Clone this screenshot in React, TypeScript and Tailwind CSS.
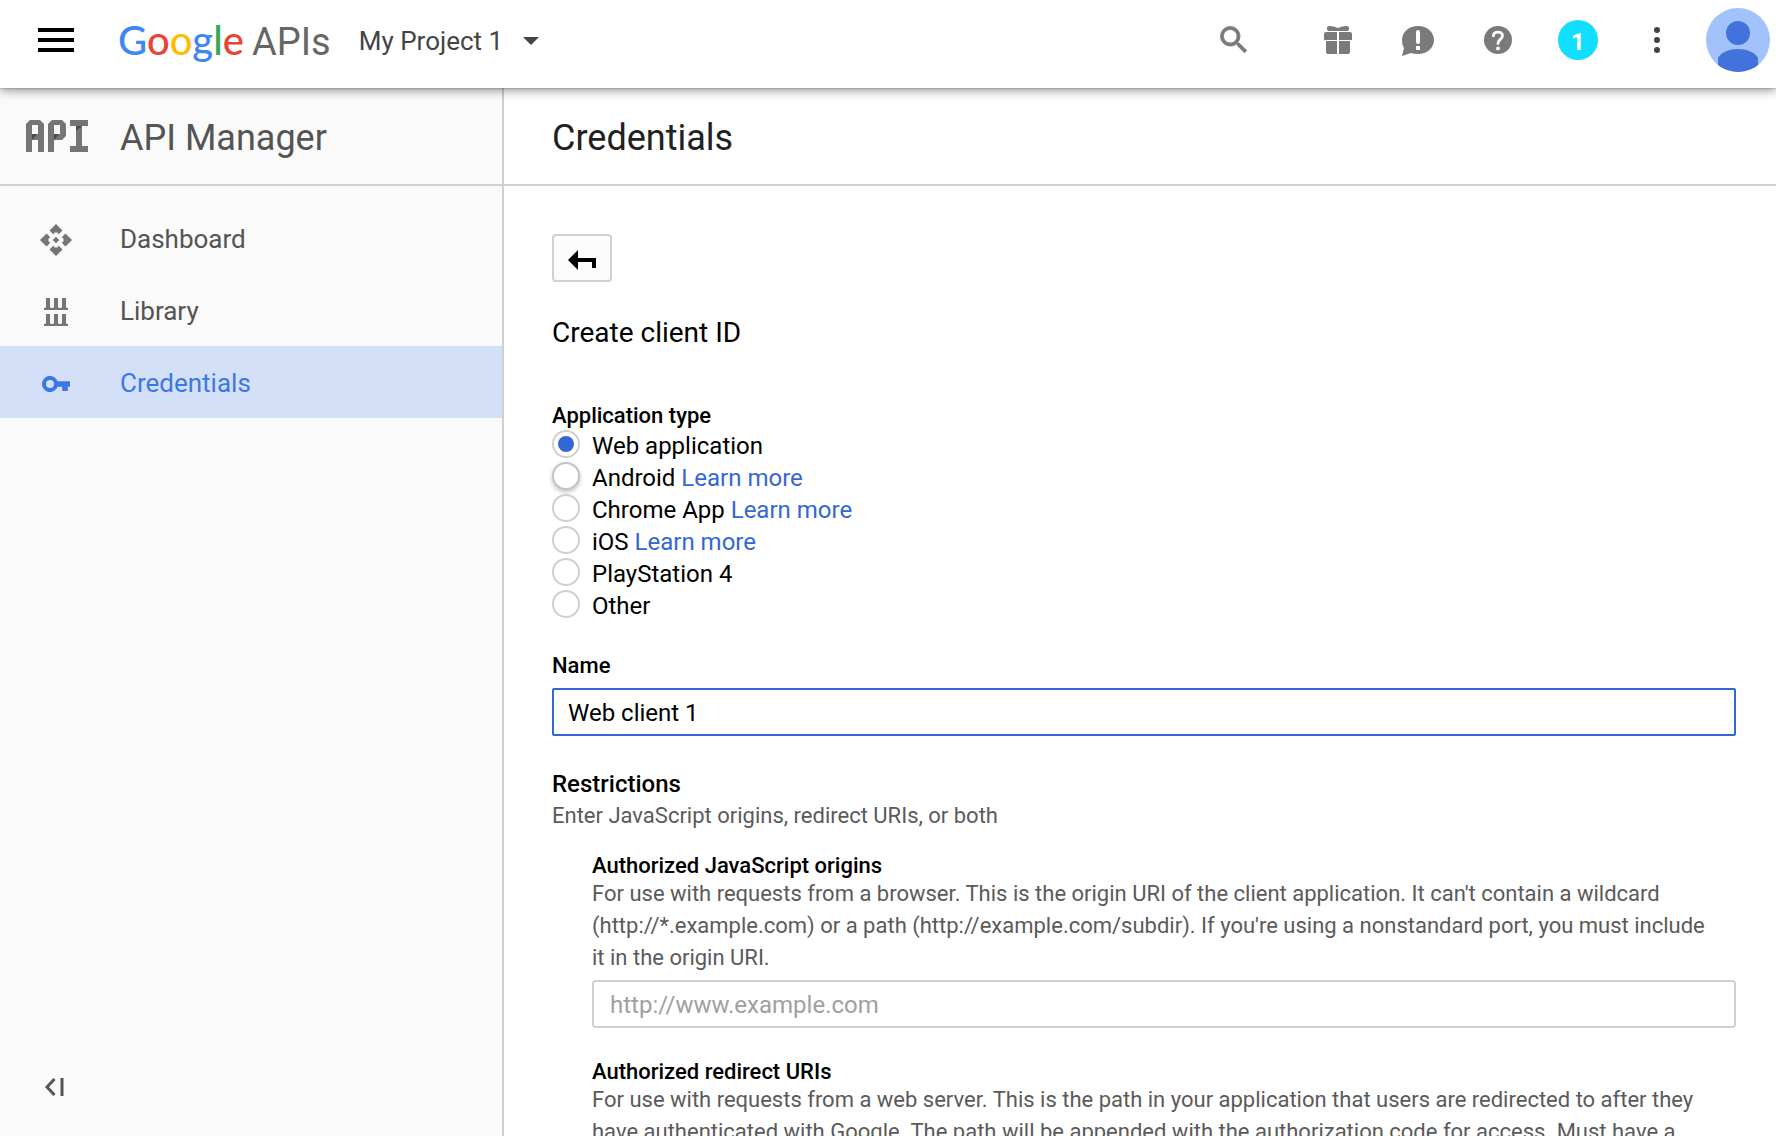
import React from "react";

const navItems = [
  { label: "Dashboard", icon: <DashboardIcon />, active: false },
  { label: "Library", icon: <LibraryIcon />, active: false },
  { label: "Credentials", icon: <KeyIcon />, active: true },
];

const appTypes = [
  { id: "web", label: "Web application", link: false, hovered: false },
  { id: "android", label: "Android", link: true, hovered: true },
  { id: "chrome", label: "Chrome App", link: true, hovered: false },
  { id: "ios", label: "iOS", link: true, hovered: false },
  { id: "ps4", label: "PlayStation 4", link: false, hovered: false },
  { id: "other", label: "Other", link: false, hovered: false },
];

function DashboardIcon() {
  return (
    <svg viewBox="0 0 32 32" className="size-8" fill="currentColor" aria-hidden="true">
      <path d="M16 0l6.500 6.500-4 4-1-2h-3l-1 2-4-4zM16 32l-6.500-6.500 4-4 1 2h3l1-2 4 4zM0 16l6.500-6.500 4 4-2 1v3l2 1-4 4zM32 16l-6.500 6.500-4-4 2-1v-3l-2-1 4-4zM16 12.800l3.200 3.200-3.200 3.200-3.200-3.200z" />
    </svg>
  );
}

function LibraryIcon() {
  return (
    <svg viewBox="0 0 32 32" className="size-8" fill="currentColor" aria-hidden="true">
      <path d="M4 12h24v2H4zM4 28h24v2H4zM6 2h4v9l1 1H5l1-1zM14 2h4v9l1 1h-6l1-1zM22 2h4v9l1 1h-6l1-1zM6 18h4v9l1 1H5l1-1zM14 18h4v9l1 1h-6l1-1zM22 18h4v9l1 1h-6l1-1z" />
    </svg>
  );
}

function KeyIcon() {
  return (
    <svg viewBox="0 0 32 32" className="size-8" fill="currentColor" aria-hidden="true">
      <path
        fillRule="evenodd"
        d="M17.500 13.300H30v5.400h-2.200V23h-5.600v-4.300h-4.700A8 8 0 1 1 17.500 13.300zM10 12a4 4 0 1 0 0 8 4 4 0 0 0 0-8z"
      />
    </svg>
  );
}

function ApiIcon() {
  return (
    <svg viewBox="0 0 62 32" className="h-8 w-[62px]" fill="#757575" aria-hidden="true">
      <path fillRule="evenodd" d="M0 32V4l4-4h10l4 4v28h-6V20H6v12zM6 5v9h6V5z" />
      <path fillRule="evenodd" d="M22 32V4l4-4h10l4 4v12l-4 4h-8v12zM28 5v9h6V5z" />
      <path d="M44 0h18v6h-6v20h6v6H44v-6h6V6h-6z" />
      <path fill="#4a4a4a" d="M6 14h5l-5 6zM28 14h5l-5 6zM50 6h6l-6 5z" />
    </svg>
  );
}

function Header() {
  return (
    <header className="relative z-10 flex h-[88px] items-center bg-white pr-1.5 pb-2 pl-[38px] shadow-[0_0_2px_rgba(0,0,0,0.35),0_2px_10px_rgba(0,0,0,0.45)]">
      <button type="button" aria-label="Menu" className="w-9">
        <svg viewBox="0 0 36 24" className="h-6 w-9" aria-hidden="true">
          <path d="M0 0h36v4H0zM0 10h36v4H0zM0 20h36v4H0z" />
        </svg>
      </button>
      <a href="#home" className="ml-11 flex items-baseline gap-2 pt-0.5 whitespace-nowrap">
        <span className="font-['Lato',sans-serif] text-[40px] leading-[56px] font-medium">
          <span className="text-[#4285f4]">G</span>
          <span className="text-[#ea4335]">o</span>
          <span className="text-[#fbbc05]">o</span>
          <span className="text-[#4285f4]">g</span>
          <span className="text-[#34a853]">l</span>
          <span className="text-[#ea4335]">e</span>
        </span>
        <span className="text-[38px] leading-[56px] text-[#666]">APIs</span>
      </a>
      <button type="button" className="ml-7 flex items-center gap-5 pt-0.5 text-[26px] text-[#444]">
        My Project 1
        <svg viewBox="0 0 16 8" className="h-2 w-4" fill="currentColor" aria-hidden="true">
          <path d="M0 0h16l-8 8z" />
        </svg>
      </button>
      <div className="ml-auto flex items-center text-[#7a7a7a]">
        <button type="button" aria-label="Search" className="mr-[72px]">
          <svg viewBox="0 0 24 24" className="size-9" fill="currentColor" stroke="currentColor" strokeWidth="0.600" aria-hidden="true">
            <path d="M15.500 14h-.790l-.280-.270A6.471 6.471 0 0 0 16 9.500 6.500 6.500 0 1 0 9.500 16c1.610 0 3.090-.590 4.230-1.570l.270.280v.790l5 4.990L20.490 19l-4.990-5zm-6 0C7.010 14 5 11.990 5 9.500S7.010 5 9.500 5 14 7.010 14 9.500 11.990 14 9.500 14z" />
          </svg>
        </button>
        <button type="button" aria-label="Free trial" className="mr-[50px]">
          <svg viewBox="0 0 28 28" className="size-7" fill="currentColor" aria-hidden="true">
            <path d="M3 2c0-3 6-2 11 0 5-2 11-3 11 0v1q0 2-2 2H5Q3 5 3 3zM2 6h11v8H0V8q0-2 2-2zM15 6h11q2 0 2 2v6H15zM2 15h11v13H4q-2 0-2-2zM15 15h11v11q0 2-2 2h-9z" />
          </svg>
        </button>
        <button type="button" aria-label="Send feedback" className="mr-[50px]">
          <svg viewBox="0 0 32 32" className="size-8" aria-hidden="true">
            <path fill="currentColor" d="M16 2C25 2 32 8 32 16S25 30 16 30Q12 30 9 29L0 32 2 24Q0 21 0 16C0 8 7 2 16 2z" />
            <path stroke="#fff" strokeWidth="4" strokeLinecap="round" d="M16 8v10" />
            <path fill="#fff" d="M14 22h4v4h-4z" />
          </svg>
        </button>
        <button type="button" aria-label="Help" className="mr-[46px]">
          <svg viewBox="2 2 20 20" className="size-7" aria-hidden="true">
            <circle cx="12" cy="12" r="10" fill="currentColor" />
            <path
              fill="none"
              stroke="#fff"
              strokeWidth="2"
              strokeLinecap="round"
              d="M8.700 9C9 5.500 15 5.500 15.200 9c0 2.500-3.200 2.700-3.200 5.500"
            />
            <circle cx="12" cy="18" r="1.400" fill="#fff" />
          </svg>
        </button>
        <button
          type="button"
          aria-label="Notifications"
          className="mr-14 size-10 rounded-full bg-[#12dfff] pt-1 text-[24px] leading-9 font-bold text-white"
        >
          1
        </button>
        <button type="button" aria-label="More" className="mr-[46px]">
          <svg viewBox="0 0 6 26" className="h-[26px] w-1.5" fill="#444" aria-hidden="true">
            <circle cx="3" cy="3" r="3" />
            <circle cx="3" cy="13" r="3" />
            <circle cx="3" cy="23" r="3" />
          </svg>
        </button>
        <button type="button" aria-label="Account" className="overflow-hidden rounded-full">
          <svg viewBox="0 0 64 64" className="size-16" aria-hidden="true">
            <path fill="#a1c2fa" d="M0 0h64v64H0z" />
            <circle cx="32" cy="25" r="12" fill="#4272db" />
            <path fill="#4272db" d="M12 64V50C15 44 24 41 32 41s17 3 20 9v14z" />
          </svg>
        </button>
      </div>
    </header>
  );
}

function Sidebar() {
  return (
    <aside className="flex w-[504px] shrink-0 flex-col border-r-2 border-[#d0d0d0] bg-[#fafafa] text-[#545454]">
      <div className="flex h-[98px] items-center gap-8 border-b-2 border-[#d0d0d0] pl-[26px]">
        <ApiIcon />
        <span className="pt-1 text-[36px]">API Manager</span>
      </div>
      <nav className="pt-4">
        {navItems.map((item) => (
          <a
            key={item.label}
            href="#nav"
            className={
              item.active
                ? "flex h-[72px] items-center gap-12 bg-[#d4e0f7] pt-0.5 pl-10 text-[26px] text-[#3b78e7]"
                : "flex h-[72px] items-center gap-12 pt-0.5 pl-10 text-[26px]"
            }
          >
            <span className={item.active ? "pt-0.5" : "pt-0.5 text-[#757575]"}>{item.icon}</span>
            {item.label}
          </a>
        ))}
      </nav>
      <button type="button" aria-label="Collapse menu" className="mt-auto mb-10 ml-11 self-start">
        <svg viewBox="0 0 20 18" className="h-[18px] w-5" aria-hidden="true">
          <path fill="none" stroke="#545454" strokeWidth="3" d="M10.500 1L3 9l7.500 8M18 0v18" />
        </svg>
      </button>
    </aside>
  );
}

export default function App() {
  return (
    <div className="flex h-screen flex-col overflow-hidden bg-white font-['Roboto',sans-serif] text-black">
      <Header />
      <div className="flex min-h-0 flex-1">
        <Sidebar />
        <main className="min-w-0 flex-1 overflow-hidden">
          <h1 className="flex h-[98px] items-center border-b-2 border-[#d0d0d0] pt-1 pl-12 text-[36px] text-[#212121]">
            Credentials
          </h1>
          <form className="pt-12 pr-10 pl-12">
            <button
              type="button"
              aria-label="Back"
              className="flex h-12 w-[60px] items-center justify-center rounded-sm border-2 border-[#d0d0d0] bg-[#fcfcfc] pt-1"
            >
              <svg viewBox="0 0 28 20" className="h-5 w-7" aria-hidden="true">
                <path d="M0 10L10 0v8h18v10h-4v-6H10v8z" />
              </svg>
            </button>
            <h2 className="mt-8 text-[28px] leading-[38px]">Create client ID</h2>

            <fieldset className="mt-12">
              <legend className="text-[22px] leading-8 font-medium">Application type</legend>
              <div className="-mt-0.5">
                {appTypes.map((type) => (
                  <div key={type.id} className="flex h-8 items-start gap-3">
                    <input
                      type="radio"
                      name="app-type"
                      id={type.id}
                      defaultChecked={type.id === "web"}
                      className={
                        type.hovered
                          ? "size-7 appearance-none rounded-full border-2 border-[#c4c4c4] bg-white shadow-[0_2px_4px_rgba(0,0,0,0.25)]"
                          : "size-7 appearance-none rounded-full border-2 border-[#d0d0d0] bg-white bg-clip-content p-1 checked:bg-[#3367d6]"
                      }
                    />
                    <span className="text-[24px] leading-8">
                      <label htmlFor={type.id}>{type.label}</label>
                      {type.link && (
                        <>
                          {" "}
                          <a href="#learn-more" className="text-[#3367d6]">
                            Learn more
                          </a>
                        </>
                      )}
                    </span>
                  </div>
                ))}
              </div>
            </fieldset>

            <label htmlFor="name" className="mt-7 block text-[22px] leading-8 font-medium">
              Name
            </label>
            <input
              id="name"
              defaultValue="Web client 1"
              className="mt-1.5 block h-12 w-full rounded-xs border-2 border-[#3367d6] px-3.5 pt-0.5 text-[24px] outline-none"
            />

            <h3 className="mt-8 text-[24px] leading-8 font-medium">Restrictions</h3>
            <p className="text-[22px] leading-8 text-[#5a5a5a]">Enter JavaScript origins, redirect URIs, or both</p>

            <div className="pl-10">
              <label htmlFor="origins" className="mt-[18px] block text-[22px] leading-8 font-medium">
                Authorized JavaScript origins
              </label>
              <p className="-mt-1 pr-4 text-[22px] leading-8 text-[#5a5a5a]">
                For use with requests from a browser. This is the origin URI of the client application. It can't contain
                a wildcard (http://*.example.com) or a path (http://example.com/subdir). If you're using a nonstandard
                port, you must include it in the origin URI.
              </p>
              <input
                id="origins"
                placeholder="http://www.example.com"
                className="mt-1.5 block h-12 w-full rounded-sm border-2 border-[#d0d0d0] px-4 pt-0.5 text-[24px] outline-none placeholder:text-[#a0a0a0]"
              />
              <h3 className="mt-7 text-[22px] leading-8 font-medium">Authorized redirect URIs</h3>
              <p className="-mt-1 pr-4 text-[22px] leading-8 text-[#5a5a5a]">
                For use with requests from a web server. This is the path in your application that users are redirected
                to after they have authenticated with Google. The path will be appended with the authorization code for
                access. Must have a
              </p>
            </div>
          </form>
        </main>
      </div>
    </div>
  );
}
